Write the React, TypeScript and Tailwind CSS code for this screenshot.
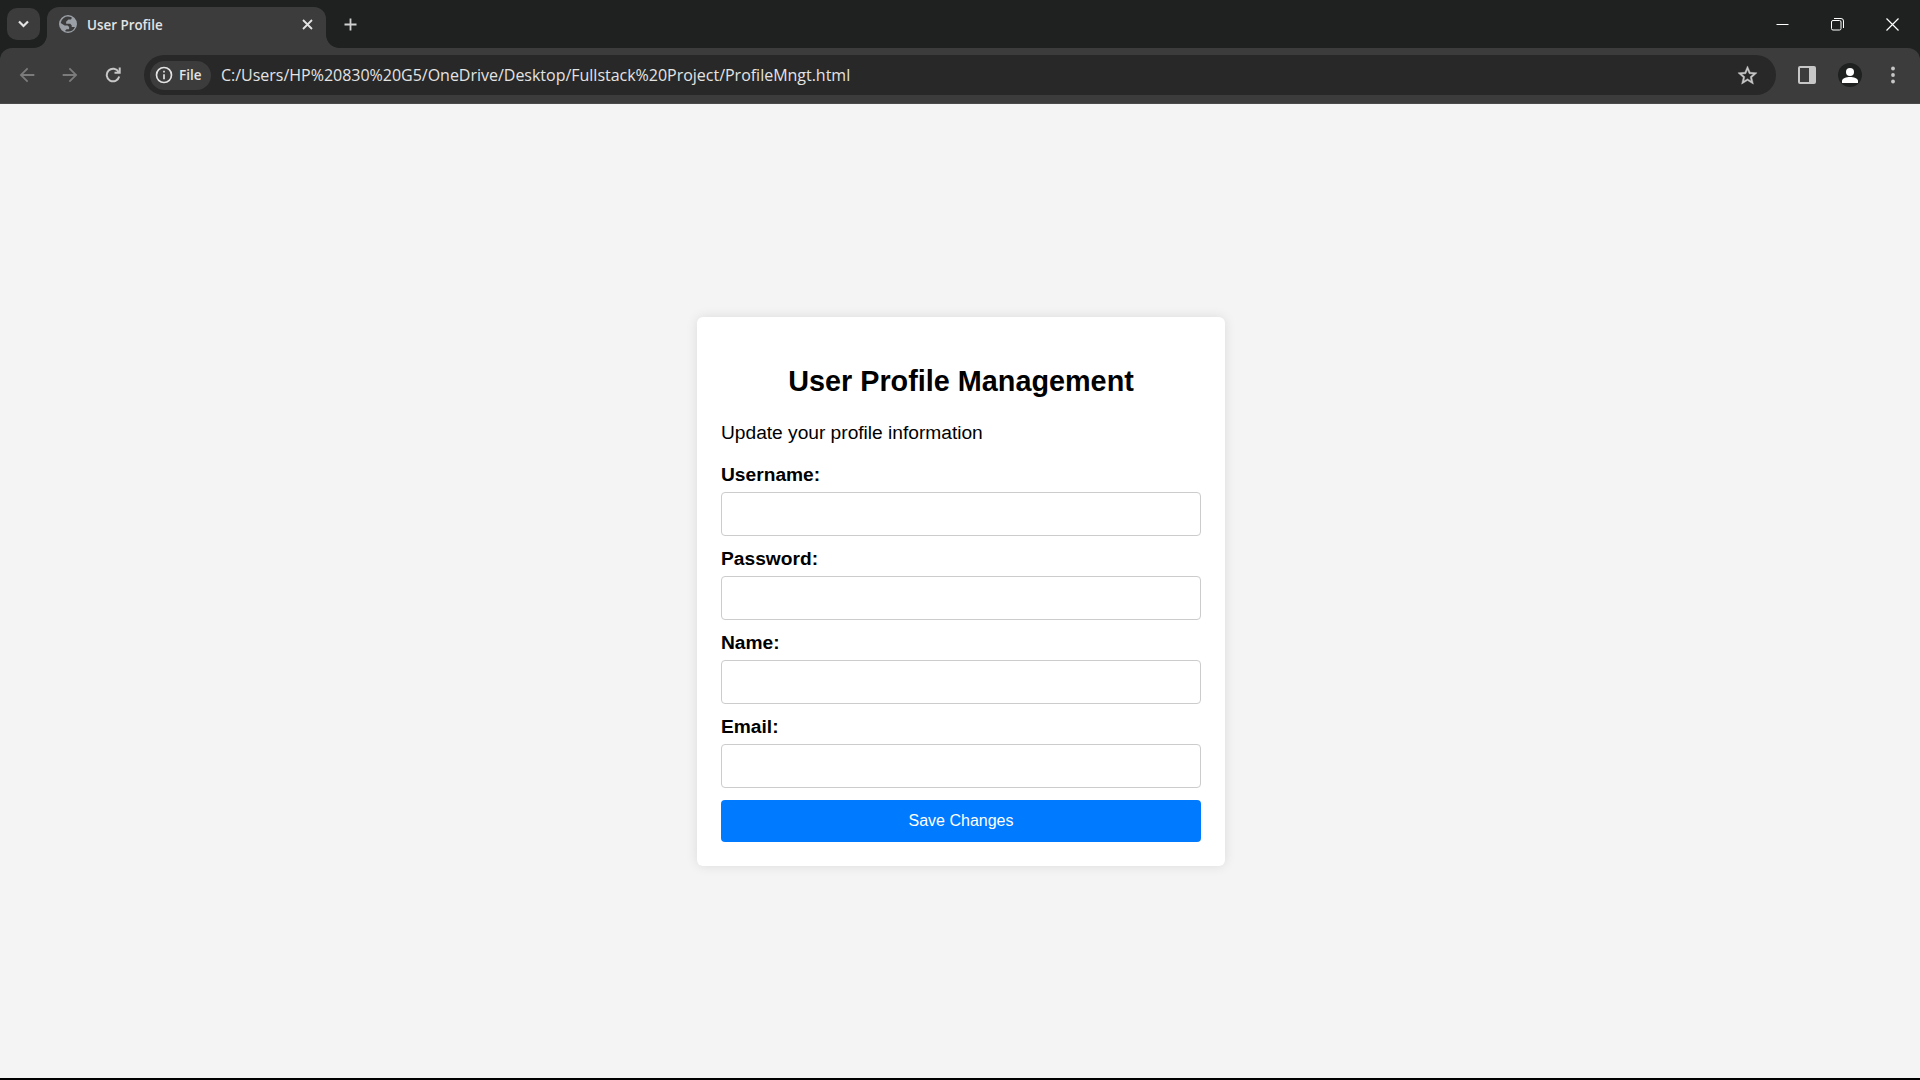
import type { ReactNode } from "react";

function Icon({ size, className, children }: { size: number; className?: string; children: ReactNode }) {
  return (
    <svg width={size} height={size} viewBox="0 0 24 24" fill="currentColor" className={`block shrink-0 ${className ?? ""}`}>
      {children}
    </svg>
  );
}

function TabStrip() {
  return (
    <div className="flex h-12 shrink-0 items-end bg-[#1f2120]">
      <button className="mb-2 ml-[7px] flex h-8 w-[33px] items-center justify-center rounded-[10px] bg-[#3c3c3c] text-[#e3e3e3]">
        <svg width="11" height="8" viewBox="0 0 11 8" fill="none" stroke="currentColor" strokeWidth="2.200">
          <path d="M1 1.500l4.500 4.500L10 1.500" />
        </svg>
      </button>
      <div className="-ml-[6px] size-[13px] bg-[radial-gradient(circle_at_0_0,transparent_12.5px,#3c3c3c_13.2px)]" />
      <div className="flex h-[41px] w-[279px] items-start rounded-t-[12px] bg-[#3c3c3c] pl-3 pt-2">
        <Icon size={18} className="text-[#9aa0a6]">
          <path
            fillRule="evenodd"
            d="M12 0a12 12 0 1 0 0 24a12 12 0 0 0 0-24zM14 2.400c1.200.2 2.300.6 3.300 1.200L16 6H12.500L9.500 9v2.500h5.500l2 2.500v2h4.300a9.900 9.900 0 0 1-9.300 6c-1.500 0-2.800-.3-4-.8L10 19h3.500V16L11.500 14H7.500L2.200 10.800A9.800 9.800 0 0 1 14 2.400z"
          />
        </Icon>
        <span className="ml-[10px] flex h-[19px] w-[226px] items-center justify-between">
          <span className="mt-[2px] whitespace-nowrap font-['Open_Sans',sans-serif] text-[13.4px] leading-[19px] font-semibold text-[#e3e3e3]">User Profile</span>
          <svg width="11" height="11" viewBox="0 0 11 11" fill="none" stroke="#e3e3e3" strokeWidth="1.800" className="mb-[1px]">
            <path d="M1 1l9 9M10 1l-9 9" />
          </svg>
        </span>
      </div>
      <div className="size-[13px] bg-[radial-gradient(circle_at_100%_0,transparent_12.5px,#3c3c3c_13.2px)]" />
      <svg width="13" height="13" viewBox="0 0 13 13" fill="none" stroke="#d0d0d0" strokeWidth="1.800" className="mb-[17px] ml-[5px]">
        <path d="M6.500 .5v12M.5 6.500h12" />
      </svg>
      <div className="mb-[17px] ml-auto mr-[21px] flex items-center gap-[42px] text-white">
        <svg width="13" height="13" viewBox="0 0 13 13" stroke="currentColor" fill="none">
          <path d="M.5 6.500h12" />
        </svg>
        <svg width="13" height="13" viewBox="0 0 13 13" stroke="currentColor" fill="none">
          <rect x=".5" y="2.500" width="9.500" height="9.500" rx="1.500" />
          <path d="M3 .5h7a2.500 2.500 0 0 1 2.500 2.500v7" />
        </svg>
        <svg width="13" height="13" viewBox="0 0 13 13" stroke="currentColor" fill="none" strokeWidth="1.200">
          <path d="M.5 .5l12 12M12.500 .5l-12 12" />
        </svg>
      </div>
    </div>
  );
}

function Toolbar() {
  return (
    <div className="h-14 shrink-0 bg-[#1f2120]">
      <div className="flex h-14 items-center rounded-t-[12px] border-b border-[#4a4a4a] bg-[#3c3c3c] pb-[1px] text-[#c7c7c7]">
        <Icon size={22} className="ml-[16px] text-[#7b7b7b]">
          <path d="M20 11H7.830l5.590-5.590L12 4l-8 8 8 8 1.410-1.410L7.830 13H20v-2z" />
        </Icon>
        <Icon size={22} className="ml-[21px] text-[#7b7b7b]">
          <path d="M12 4l-1.410 1.410L16.170 11H4v2h12.170l-5.580 5.590L12 20l8-8z" />
        </Icon>
        <svg width="16" height="16" viewBox="0 0 16 16" fill="none" stroke="currentColor" strokeWidth="2" className="ml-[24px] shrink-0">
          <path d="M13.600 5A6.300 6.300 0 1 0 14.200 9.500" />
          <path d="M9.500 5.800h5.200V.6" />
        </svg>
        <div className="ml-[23px] flex h-10 w-[1632px] items-center rounded-full bg-[#282828] pl-[6px]">
          <div className="flex h-[29px] w-[61px] items-center rounded-full bg-[#3c3c3c] pl-[4px] text-[#e3e3e3]">
            <Icon size={20}>
              <path d="M11 7h2v2h-2zm0 4h2v6h-2zm1-9a10 10 0 1 0 0 20 10 10 0 0 0 0-20zm0 18a8 8 0 1 1 0-16 8 8 0 0 1 0 16z" />
            </Icon>
            <span className="ml-[5px] font-['Open_Sans',sans-serif] text-[13.5px] leading-5 font-semibold">File</span>
          </div>
          <span className="ml-[10px] whitespace-nowrap font-['Open_Sans',sans-serif] text-[16px] leading-6 tracking-[-0.015px] text-[#e3e3e3]">
            C:/Users/HP%20830%20G5/OneDrive/Desktop/Fullstack%20Project/ProfileMngt.html
          </span>
          <Icon size={23} className="mr-[17px] ml-auto">
            <path
              stroke="currentColor"
              strokeWidth=".4"
              d="M22 9.240l-7.190-.62L12 2 9.190 8.630 2 9.240l5.460 4.730L5.820 21 12 17.270 18.180 21l-1.630-7.030L22 9.240zM12 15.400l-3.760 2.270 1-4.280-3.320-2.880 4.380-.38L12 6.100l1.710 4.040 4.380.38-3.320 2.880 1 4.280L12 15.400z"
            />
          </Icon>
        </div>
        <svg width="18" height="18" viewBox="0 0 18 18" className="ml-[22px]" fill="none">
          <rect x="1" y="1" width="16" height="16" rx="1" stroke="currentColor" strokeWidth="2" />
          <path d="M11 1h6v16h-6z" fill="currentColor" />
        </svg>
        <div className="ml-[22px] flex size-6 items-center justify-center rounded-full bg-[#1f2120] text-white">
          <svg width="16" height="16" viewBox="0 0 16 16" fill="currentColor" className="mt-[1px]">
            <circle cx="8" cy="4" r="4" />
            <path d="M0 15v-2c0-2.700 4.500-4 8-4s8 1.300 8 4v2z" />
          </svg>
        </div>
        <svg width="4" height="18" viewBox="0 0 4 18" fill="currentColor" className="ml-[29px]">
          <circle cx="2" cy="2.500" r="1.900" />
          <circle cx="2" cy="9" r="1.900" />
          <circle cx="2" cy="15.500" r="1.900" />
        </svg>
      </div>
    </div>
  );
}

function Field({ label, type }: { label: string; type: string }) {
  return (
    <label className="mb-3 block h-[72px]">
      <span className="block h-7 text-[19.2px] leading-[22px] font-bold">{label}</span>
      <input type={type} className="block h-11 w-full rounded-[4px] border border-[#ccc] bg-white px-3 outline-none" />
    </label>
  );
}

export default function App() {
  return (
    <div className="flex h-[1080px] w-[1920px] flex-col overflow-hidden bg-[#f4f4f4]">
      <TabStrip />
      <Toolbar />
      <main className="flex flex-1 items-center justify-center font-['Liberation_Sans',Arial,sans-serif] text-black">
        <form className="mt-[1px] ml-[2px] h-[549px] w-[528px] rounded-[6px] bg-white px-6 pt-[47px] shadow-[0_0_12px_rgba(0,0,0,0.1)]">
          <h1 className="text-center text-[28.8px] leading-[34px] font-bold">User Profile Management</h1>
          <p className="mt-[24px] mb-[20px] text-[19.2px] leading-[22px] tracking-[-0.02px]">Update your profile information</p>
          <Field label="Username:" type="text" />
          <Field label="Password:" type="password" />
          <Field label="Name:" type="text" />
          <Field label="Email:" type="email" />
          <button type="button" className="flex h-[42px] w-full items-center justify-center rounded-[4px] bg-[#007bff] text-[16px] text-white">
            Save Changes
          </button>
        </form>
      </main>
      <div className="h-[2px] shrink-0 bg-black" />
    </div>
  );
}
